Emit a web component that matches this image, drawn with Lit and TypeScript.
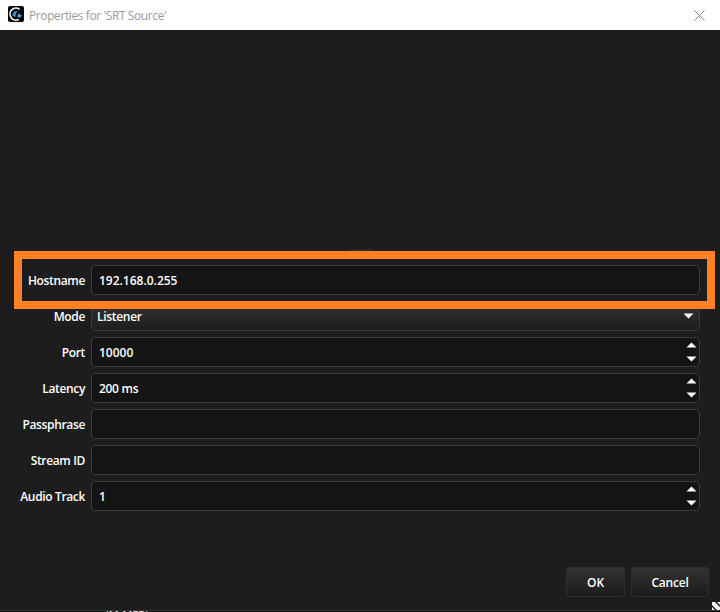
import { LitElement, html, css, svg } from "lit";
import { customElement } from "lit/decorators.js";
import { classMap } from "lit/directives/class-map.js";

type Row = { label: string; value: string; kind: "text" | "select" | "spin"; tight?: boolean };

const rows: Row[] = [
  { label: "Hostname", value: "192.168.0.255", kind: "text" },
  { label: "Mode", value: "Listener", kind: "select", tight: true },
  { label: "Port", value: "10000", kind: "spin" },
  { label: "Latency", value: "200 ms", kind: "spin", tight: true },
  { label: "Passphrase", value: "", kind: "text" },
  { label: "Stream ID", value: "", kind: "text" },
  { label: "Audio Track", value: "1", kind: "spin" },
];

const up = svg`<svg class="arrow" width="11" height="6" viewBox="0 0 11 6"><path d="M5.5 0.5 L10.5 5.5 H0.5 Z" fill="#fff"/></svg>`;
const down = svg`<svg class="arrow" width="11" height="6" viewBox="0 0 11 6"><path d="M0.5 0.5 H10.5 L5.5 5.5 Z" fill="#fff"/></svg>`;

@customElement("app-root")
export class AppRoot extends LitElement {
  static styles = css`
    :host {
      display: block;
      width: 720px;
      height: 612px;
      position: relative;
      overflow: hidden;
      background: #1d1d1d;
      font-family: "Open Sans", "Noto Sans", sans-serif;
      font-size: 12px;
      font-weight: 600;
      color: #fff;
    }
    .page { display: flex; flex-direction: column; height: 612px; }
    .titlebar {
      height: 30px;
      flex: none;
      background: #fff;
      display: flex;
      align-items: center;
      padding: 0 15px 0 8px;
      gap: 5px;
      color: #9a9aa2;
      font-weight: 400;
    }
    .title { flex: 1; font-size: 12px; letter-spacing: -0.4px; }
    .logo { display: block; margin-bottom: 2px; }
    .close { display: block; }
    .body {
      flex: 1;
      display: flex;
      flex-direction: column;
      padding: 235px 20px 13px 0;
    }
    .form { display: flex; flex-direction: column; gap: 6px; }
    .row { display: flex; align-items: center; height: 30px; gap: 6px; }
    .label { width: 85px; text-align: right; flex: none; letter-spacing: -0.35px; }
    .tight { letter-spacing: -0.3px; }
    .control {
      flex: 1;
      height: 30px;
      box-sizing: border-box;
      border: 1px solid #3a3a3a;
      border-radius: 4px;
      background: #141414;
      display: flex;
      align-items: center;
      padding: 0 2px 0 7px;
      justify-content: space-between;
    }
    .control.select {
      padding-left: 5px;
      background: linear-gradient(#333333, #1d1d1d);
      padding-right: 5px;
    }
    .spin {
      display: flex;
      flex-direction: column;
      justify-content: space-between;
      height: 20px;
    }
    .arrow { display: block; }
    .actions { margin-top: auto; display: flex; justify-content: flex-end; gap: 6px; margin-right: -9px; }
    .btn {
      height: 30px;
      box-sizing: border-box;
      border: 1px solid #2e2e2e;
      border-radius: 3px;
      background: linear-gradient(#323232, #1c1c1c);
      color: #fff;
      display: flex;
      align-items: center;
      justify-content: center;
      font: inherit;
      padding: 0;
    }
    .ok { width: 59px; }
    .cancel { width: 78px; letter-spacing: -0.2px; }
    .footer {
      height: 2px;
      flex: none;
      background: #0a0a0a;
      border-top: 1px solid #333;
      box-sizing: border-box;
      overflow: hidden;
      display: flex;
      padding-left: 105px;
      font-size: 11px;
      line-height: 14px;
      color: #ddd;
    }
    .clip { display: block; margin-top: -3px; }
    .grip { position: absolute; right: 0; bottom: 2px; display: block; }
    .handle {
      position: absolute;
      left: 349px;
      top: 249px;
      width: 23px;
      height: 3px;
      border-radius: 2px 2px 0 0;
      background: #2a2a2a;
    }
    .highlight {
      position: absolute;
      left: 14px;
      top: 251px;
      width: 701px;
      height: 58px;
      box-sizing: border-box;
      border: 8px solid #ff8025;
      pointer-events: none;
    }
  `;

  private control(r: Row) {
    const value = html`<span class=${classMap({ value: true, tight: !!r.tight })}>${r.value}</span>`;
    if (r.kind === "select") {
      return html`<div class="control select">${value}${down}</div>`;
    }
    if (r.kind === "spin") {
      return html`<div class="control">${value}<span class="spin">${up}${down}</span></div>`;
    }
    return html`<div class="control">${value}</div>`;
  }

  render() {
    return html`
      <div class="page">
        <div class="titlebar">
          <svg class="logo" width="16" height="16" viewBox="0 0 16 16">
            <rect width="16" height="16" rx="2" fill="#050505" />
            <path d="M11.5 3.2 A6 6 0 1 0 10.8 13.4" fill="none" stroke="#f4f4f4" stroke-width="1.7" />
            <path d="M4.6 10.5 C4 7 6.6 4.4 10 5 C8.4 6 7.2 8 7.6 11.2 C6.6 10.4 5.4 10.2 4.6 10.5 Z" fill="#3d97d3" />
            <path d="M10.5 7.2 L14 9.5 L11.5 12 L9 10.5 Z" fill="#3d97d3" />
          </svg>
          <span class="title">Properties for 'SRT Source'</span>
          <svg class="close" width="11" height="11" viewBox="0 0 11 11">
            <path d="M0.5 0.5 L10.5 10.5 M10.5 0.5 L0.5 10.5" stroke="#8a8a8a" stroke-width="1" fill="none" />
          </svg>
        </div>
        <div class="body">
          <div class="form">
            ${rows.map(
              (r) => html`<div class="row">
                <span class="label">${r.label}</span>
                ${this.control(r)}
              </div>`
            )}
          </div>
          <div class="actions">
            <button class="btn ok">OK</button>
            <button class="btn cancel">Cancel</button>
          </div>
        </div>
        <div class="footer"><span class="clip">(M-MFB)</span></div>
      </div>
      <div class="handle"></div>
      <div class="highlight"></div>
      <svg class="grip" width="8" height="8" viewBox="0 0 8 8">
        <path d="M0 0 H3 L8 5 V8 H5 L0 3 Z M0 5 L3 8 H0 Z M5 0 H8 V3 Z" fill="#f2f2f2" />
      </svg>
    `;
  }
}
